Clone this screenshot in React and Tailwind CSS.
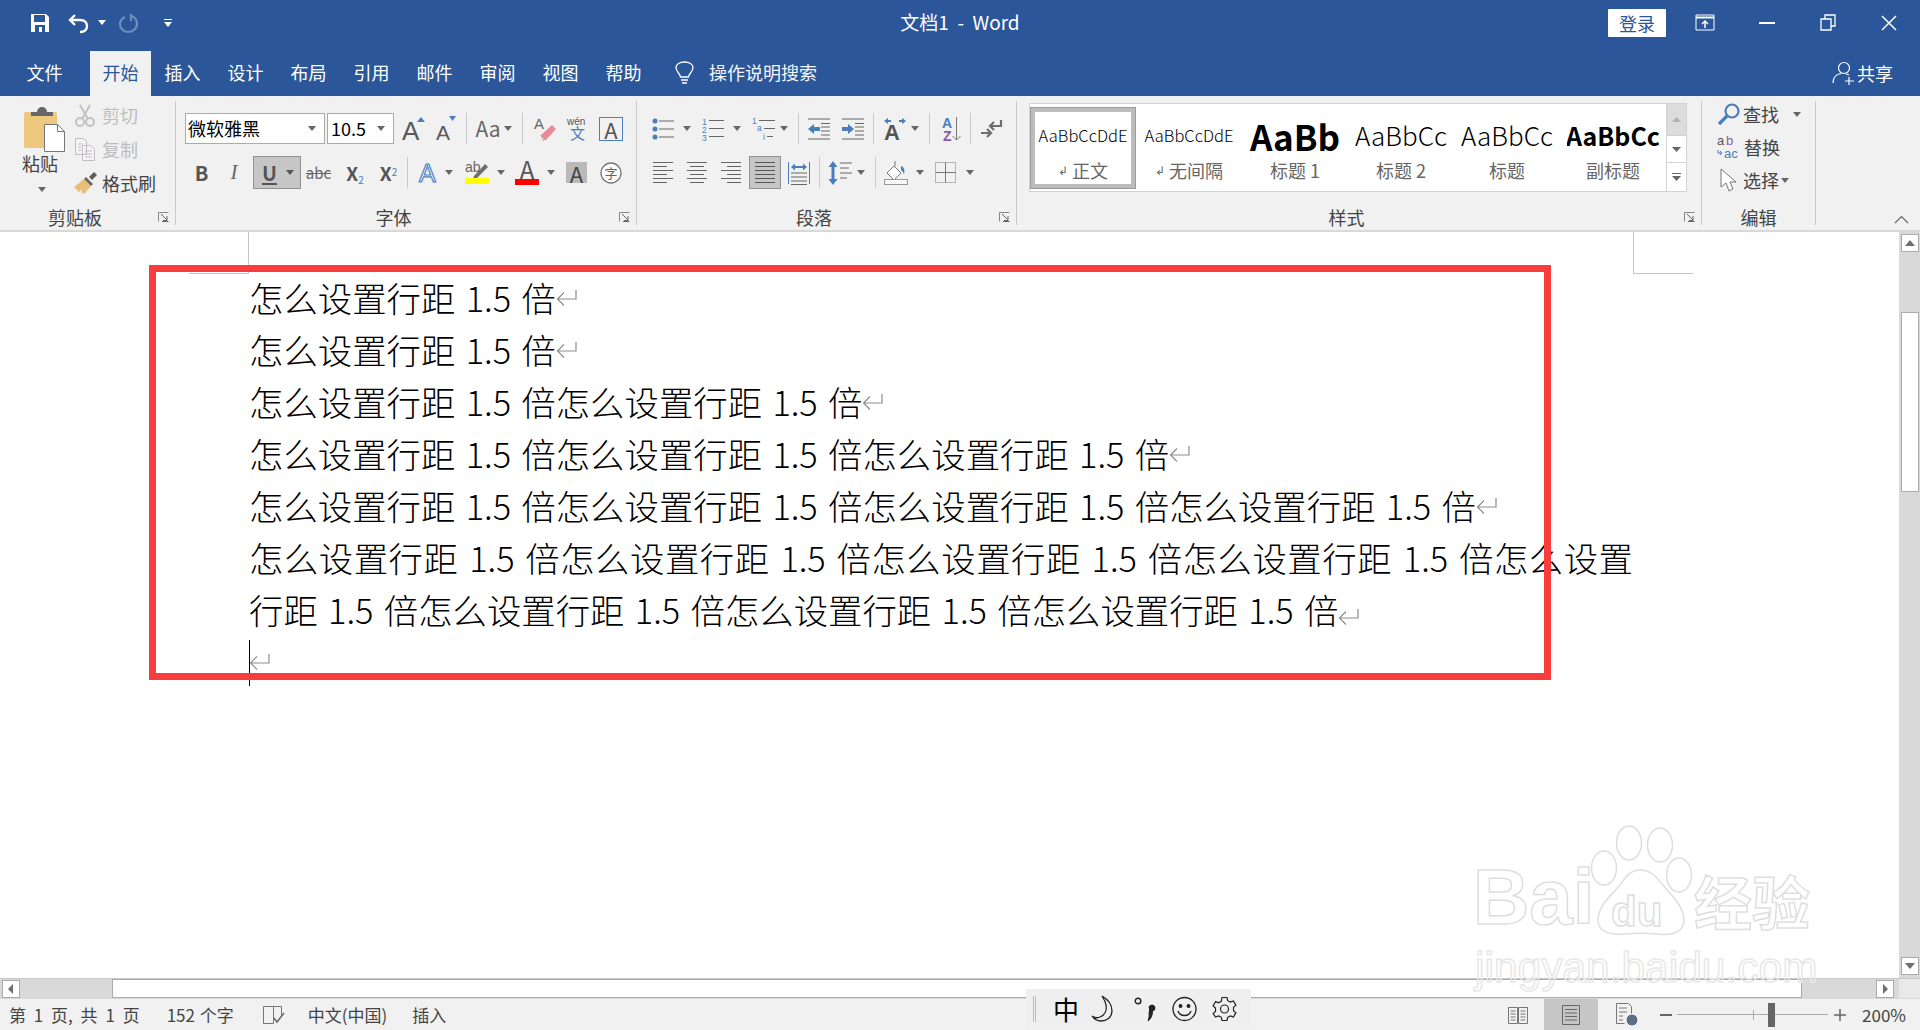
import React from "react";

const GR = "#666666";
const BL = "#4a7ebb";
const Slot = ({ c = "", children }) => <div className={"flex items-center justify-center shrink-0 " + c}>{children}</div>;
const Tri = ({ c = "w-[8px] ml-[4px]", color = "#666" }) => (
  <Slot c={c}><svg width="8" height="5"><path d="M0 0h8L4 5z" fill={color} /></svg></Slot>
);
const Sep = ({ c = "" }) => <div className={"w-px h-[31px] bg-[#c9c9c9] shrink-0 " + c} />;
const T = ({ x, y, s = 12, f = "#555", w = 400, children }) => (
  <text x={x} y={y} fontSize={s} fill={f} fontWeight={w} fontFamily="'Liberation Sans','Noto Sans CJK SC',sans-serif">{children}</text>
);
const Lines = ({ w = 20, rows, top = 0, gap = 4, color = GR, h = 22 }) => (
  <svg width={w} height={h}>
    {rows.map((r, i) => <rect key={i} x={r[0]} y={top + i * gap} width={r[1] - r[0]} height="1" fill={color} />)}
  </svg>
);
const Launcher = () => (
  <svg width="11" height="10"><path d="M0.5 0.5h10M0.5 0.5v9" stroke="#888" fill="none" /><path d="M3 2l6 6M9 4v4.5H5M10.5 9.5H4" stroke="#666" fill="none" /></svg>
);
const GroupLabel = ({ children, launcher = true }) => (
  <div className="mt-auto mb-[-1px] h-[18px] flex items-center text-[18px] leading-none text-[#444]">
    <span className="flex-1 text-center">{children}</span>
    {launcher && <span className="w-[25px] flex justify-end pr-[6px]"><Launcher /></span>}
  </div>
);

const Save = () => (
  <svg width="20" height="20"><path d="M1 1h15l3 3v15H1z" fill="#fff" /><rect x="4" y="2" width="11" height="7" fill="#2b579a" /><rect x="5" y="12" width="10" height="7" fill="#2b579a" /><rect x="9" y="14" width="3" height="5" fill="#fff" /></svg>
);
const Undo = () => (
  <svg width="21" height="20"><path d="M7 2L2 7l5 5M2 7h10c5 0 7 3 7 6 0 4-3 6-7 6" stroke="#fff" strokeWidth="2.4" fill="none" /></svg>
);
const Redo = () => (
  <svg width="20" height="20"><path d="M6 4C2 6 1 9 1 11c0 5 4 8 8 8s9-3 9-8c0-4-2-7-6-8M12 1v7" stroke="#6c8dbd" strokeWidth="2.2" fill="none" /></svg>
);
const Bulb = () => (
  <svg width="19" height="24"><path d="M5.500 16c0-3-4.500-5-4.500-9.500C1 3 5 1 9.500 1S18 3 18 6.500C18 11 13.500 13 13.500 16z" stroke="#fff" strokeWidth="1.300" fill="none" /><path d="M6 19h7M7 22h5" stroke="#fff" strokeWidth="1.500" /></svg>
);
const Person = () => (
  <svg width="24" height="24"><circle cx="12" cy="7" r="5.500" stroke="#fff" strokeWidth="1.200" fill="none" /><path d="M1 22c0-6 4-9 8-9.500M14 13c1 .2 2 .6 3 1M17 16v8M13 20h9" stroke="#fff" strokeWidth="1.200" fill="none" /></svg>
);

const Paste = () => (
  <svg width="42" height="46">
    <path d="M1 8a2 2 0 012-2h29a2 2 0 012 2v34H3a2 2 0 01-2-2z" fill="#edc87e" />
    <path d="M8 10V6h6a5 5 0 0110 0h6v4z" fill="#666" />
    <path d="M21.500 18.500h13l7 7V45.500h-20z" fill="#fff" stroke="#777" />
    <path d="M34.500 18.500v7h7" fill="none" stroke="#777" />
  </svg>
);
const Scissors = () => (
  <svg width="20" height="23" fill="none" stroke="#c2c2c2" strokeWidth="2"><circle cx="5" cy="18" r="4" /><circle cx="15" cy="18" r="4" /><path d="M7 15L15 1M13 15L5 1" /></svg>
);
const Copy = () => (
  <svg width="20" height="23" fill="#f4f4f4" stroke="#c3bcc3"><path d="M.5 .5h8l3 3v13H.5zM7.500 7.500h8l4 4v11h-12z" /><path d="M3 6h5M3 9h3M3 12h3M10 13h7M10 16h7M10 19h7" /></svg>
);
const Brush = () => (
  <svg width="24" height="24"><path d="M10 8l7 7-7 8-3-2 1-3-3 3-5-5z" fill="#e8bf79" /><path d="M10 8l2-2 7 7-2 2z" fill="#666" /><path d="M15 6l5-5 3 3-5 5z" fill="#5c5c5c" /></svg>
);
const Eraser = () => (
  <svg width="22" height="26"><T x="0" y="13" s="15" f="#666">A</T><path d="M6 20L18 9l4 4-11 12h-2z" fill="#e88a9b" /><path d="M6 20l5 5" stroke="#fff" /></svg>
);
const Wen = () => (
  <svg width="21" height="24"><T x="0" y="8" s="10" f="#555">wén</T><T x="3" y="22" s="15" f={BL}>文</T></svg>
);
const Highlighter = () => (
  <svg width="24" height="23"><T x="0" y="11" s="14" f="#666">ab</T><path d="M9 15L20 3l3 3-11 11-4 1z" fill="#6e6e6e" /><rect y="17" width="24" height="6" fill="#ffff00" /></svg>
);
const Aletter = ({ f = "#595959", s = 26, w = 400, x = 0, y = 21, W = 22, H = 24, extra = null }) => (
  <svg width={W} height={H}><T x={x} y={y} s={s} f={f} w={w}>A</T>{extra}</svg>
);
const CircleZi = () => (
  <svg width="22" height="22"><circle cx="11" cy="11" r="10" stroke="#777" strokeWidth="1.300" fill="#fff" /><T x="4.500" y="16" s="13" f="#666">字</T></svg>
);
const Bullets = () => (
  <svg width="22" height="22"><circle cx="3" cy="3" r="2.500" fill={BL} /><circle cx="3" cy="11" r="2.500" fill={BL} /><circle cx="3" cy="19" r="2.500" fill={BL} /><path d="M7 3h15M7 11h15M7 19h15" stroke={GR} /></svg>
);
const Numbered = () => (
  <svg width="22" height="24"><T x="0" y="8" s="8.500" f={BL}>1</T><T x="0" y="16" s="8.500" f={BL}>2</T><T x="0" y="24" s="8.500" f={BL}>3</T><path d="M7 3.500h15M7 11.500h15M7 19.500h15" stroke={GR} /></svg>
);
const Multi = () => (
  <svg width="23" height="24"><T x="0" y="7" s="8.500" f={BL}>1</T><T x="5" y="14" s="8.500" f={BL}>a</T><T x="11" y="23" s="8.500" f={BL}>i</T><path d="M7 3.500h16M12 11.500h11M15 19.500h6" stroke={GR} /></svg>
);
const Dec = () => (
  <svg width="22" height="22"><path d="M0 1h22M0 21h22M13 5.500h9M13 9h9M13 13h9M13 17h9" stroke={GR} /><path d="M0 11l6-5v3h6v4H6v3z" fill={BL} /></svg>
);
const Inc = () => (
  <svg width="22" height="22"><path d="M0 1h22M0 21h22M13 5.500h9M13 9h9M13 13h9M13 17h9" stroke={GR} /><path d="M12 11L6 6v3H0v4h6v3z" fill={BL} /></svg>
);
const TextDir = () => (
  <svg width="24" height="24"><T x="1" y="23" s="22" f="#555" w="700">A</T><path d="M1 4l4-3v2h3v2H5v2zM23 4l-4-3v2h-3v2h3v2z" fill={BL} /></svg>
);
const Sort = () => (
  <svg width="19" height="26"><T x="0" y="12" s="14" f={BL} w="700">A</T><T x="1" y="25" s="14" f="#8a5aa8" w="700">Z</T><path d="M14.500 1v23M10.500 20l4 4 4-4" stroke="#777" fill="none" /></svg>
);
const Marks = () => (
  <svg width="21" height="20" fill="none" stroke="#6e6e6e" strokeWidth="2.200"><path d="M20 1v6H9M13 3L9 7l4 4M0 14h10M6 10l4 4-4 4" /></svg>
);
const Distrib = () => (
  <svg width="22" height="24"><path d="M.5 1v22M21.500 1v22" stroke={BL} /><path d="M3 6l4-3.500v2.500h8V2.500L19 6l-4 3.500V7H7v2.500z" fill={BL} /><path d="M3 12h16M3 16h16M3 20h16M3 23.500h16" stroke={GR} /></svg>
);
const Spacing = () => (
  <svg width="24" height="24"><path d="M5 0l4.500 6H6.500v12h3L5 24 .5 18h3V6h-3z" fill={BL} /><path d="M12 2h12M12 7h9M12 12h12M12 17h7" stroke={GR} /></svg>
);
const Shading = () => (
  <svg width="24" height="24"><path d="M11 0v5M10 5l-7 7 7 7 7-7z" stroke="#777" fill="#fff" /><path d="M17 5c3 1 4 4 3 8-1-1-1-3-3-4z" fill={BL} /><rect x=".5" y="18.500" width="23" height="5" fill="#f8f8f8" stroke="#999" /></svg>
);
const Borders = () => (
  <svg width="21" height="21"><path d="M.5 .5h20v20H.5z" fill="none" stroke="#777" strokeDasharray="1 1" /><path d="M10.500 .5v20M.5 10.500h20" stroke="#777" /></svg>
);
const Magnifier = () => (
  <svg width="26" height="24" fill="none"><circle cx="16" cy="9" r="6.500" stroke={BL} strokeWidth="2.200" /><path d="M11 14L3 22" stroke={BL} strokeWidth="3.200" /></svg>
);
const Replace = () => (
  <svg width="24" height="24"><T x="0" y="10" s="13" f="#555">a</T><T x="9" y="10" s="13" f="#8a5aa8">b</T><T x="7" y="23" s="13" f={BL}>ac</T><path d="M1 15v3h4M3 16l2 2-2 2" stroke={BL} fill="none" /></svg>
);
const Cursor = () => (
  <svg width="18" height="24"><path d="M1 1v18l5-4 3 8 4-2-3-7h6z" fill="#fff" stroke="#777" /></svg>
);
const ReturnMark = ({ c = "mt-[4px]" }) => (
  <svg width="21" height="20" className={"inline-block shrink-0 " + c}><path d="M20 1v9H2M8 3.500L1.500 10 8 16.500" stroke="#8e8e8e" fill="none" strokeWidth="1.200" /></svg>
);

const ScrollBtn = ({ d, c = "" }) => (
  <div className={"w-[18px] h-[18px] bg-white border border-[#ababab] flex items-center justify-center shrink-0 " + c}>
    <svg width="10" height="10"><path d={d} fill="#6f6f6f" /></svg>
  </div>
);

const unit = "怎么设置行距 1.5 倍";
const rep = (n) => Array(n).fill(unit).join("");
const lines = [1, 1, 2, 3, 4];

const StyleItem = ({ main, label, sel, mc = "text-[16.5px] font-light" }) => (
  <div className={"w-[106px] h-[82px] mt-[3px] shrink-0 flex flex-col items-center overflow-hidden " + (sel ? "border-[5px] border-[#bcbcbc] outline outline-1 outline-[#9c9c9c] -outline-offset-1" : "border-[5px] border-transparent")}>
    <div className={"h-[46px] w-[92px] flex items-center justify-center whitespace-nowrap overflow-hidden text-black " + mc}>{main}</div>
    <div className="h-[24px] flex items-center text-[18px] leading-none text-[#666]">{label}</div>
  </div>
);
const Ret = () => <span className="text-[12px] mr-[4px] text-[#666]">↲</span>;

export default function App() {
  return (
    <div className="relative w-[1920px] h-[1030px] overflow-hidden flex flex-col bg-white [&_svg]:overflow-visible font-['Noto_Sans_CJK_SC','Liberation_Sans',sans-serif]">
      {/* title bar */}
      <div className="h-[51px] bg-[#2b579a] grid grid-cols-[1fr_auto_1fr] items-center text-white shrink-0">
        <div className="flex items-center pl-[30px] pb-[6px]">
          <Save />
          <Slot c="ml-[18px]"><Undo /></Slot>
          <Tri c="ml-[9px] w-[8px]" color="#fff" />
          <Slot c="ml-[13px]"><Redo /></Slot>
          <Slot c="ml-[25px] flex-col gap-[2px]">
            <div className="w-[8px] h-[1px] bg-white" />
            <svg width="8" height="5"><path d="M0 0h8L4 5z" fill="#fff" /></svg>
          </Slot>
        </div>
        <div className="text-[19px] leading-none pb-[8px] whitespace-pre">文档1  -  Word</div>
        <div className="flex items-center justify-end pb-[6px]">
          <div className="w-[58px] h-[28px] bg-white rounded-[1px] text-[#2b579a] text-[18px] flex items-center justify-center leading-none">登录</div>
          <Slot c="ml-[29px]">
            <svg width="20" height="17" fill="none" stroke="#fff"><path d="M1 1h18v15H1z" /><path d="M1 3.500h18" strokeWidth="2" /><path d="M10 14V7M7 10l3-3 3 3" strokeWidth="1.500" /></svg>
          </Slot>
          <Slot c="ml-[44px]"><div className="w-[16px] h-[2px] bg-white" /></Slot>
          <Slot c="ml-[45px]">
            <svg width="16" height="17" fill="none" stroke="#fff" strokeWidth="1.300"><path d="M1 5h10v11H1zM5 5V1h10v11h-4" /></svg>
          </Slot>
          <Slot c="ml-[45px] mr-[23px]">
            <svg width="16" height="16" stroke="#fff" strokeWidth="1.500"><path d="M1 1l14 14M15 1L1 15" /></svg>
          </Slot>
        </div>
      </div>

      {/* tabs */}
      <div className="h-[45px] bg-[#2b579a] flex items-stretch text-white text-[18px] leading-none shrink-0">
        <div className="ml-[14px] w-[61px] flex items-center justify-center pb-[3px]">文件</div>
        <div className="ml-[15px] w-[61px] bg-[#f1f1f1] text-[#2b579a] flex items-center justify-center pb-[3px]">开始</div>
        {["插入", "设计", "布局", "引用", "邮件", "审阅", "视图", "帮助"].map((t) => (
          <div key={t} className="w-[63px] flex items-center justify-center pb-[3px]">{t}</div>
        ))}
        <div className="ml-[20px] flex items-center pb-[2px]"><Bulb /></div>
        <div className="ml-[15px] flex items-center pb-[3px] text-[#f2f5fa]">操作说明搜索</div>
        <div className="ml-auto mr-[27px] flex items-center gap-[1px] pb-[2px]"><Person /><span>共享</span></div>
      </div>

      {/* ribbon */}
      <div className="h-[136px] bg-[#f1f1f1] border-b-[2px] border-[#d8d8d8] flex pt-[5px] pb-[5px] text-[#444] text-[18px] leading-none shrink-0">
        {/* clipboard */}
        <div className="w-[176px] border-r border-[#c9c9c9] flex flex-col shrink-0">
          <div className="flex">
            <div className="w-[75px] pl-[23px] shrink-0 flex flex-col">
              <div className="mt-[5px]"><Paste /></div>
              <div className="mt-[2px] -ml-[1px] text-[18px]">粘贴</div>
              <div className="mt-[15px] ml-[15px]"><svg width="8" height="5"><path d="M0 0h8L4 5z" fill="#666" /></svg></div>
            </div>
            <div className="flex flex-col gap-[6px]">
              <div className="h-[28px] flex items-center"><Scissors /><span className="ml-[7px] text-[#bdbdbd]">剪切</span></div>
              <div className="h-[28px] flex items-center"><Copy /><span className="ml-[7px] text-[#bdbdbd]">复制</span></div>
              <div className="h-[28px] flex items-center -ml-[1px]"><Brush /><span className="ml-[4px]">格式刷</span></div>
            </div>
          </div>
          <GroupLabel>剪贴板</GroupLabel>
        </div>

        {/* font */}
        <div className="w-[461px] border-r border-[#c9c9c9] flex flex-col shrink-0">
          <div className="flex items-center h-[33px] mt-[11px]">
            <div className="ml-[9px] w-[140px] h-[31px] bg-white border border-[#ababab] flex items-center pl-[2px] pr-[8px] shrink-0">
              <span className="flex-1 text-black pb-[2px]">微软雅黑</span>
              <svg width="8" height="5"><path d="M0 0h8L4 5z" fill="#666" /></svg>
            </div>
            <div className="ml-[2px] w-[67px] h-[31px] bg-white border border-[#ababab] flex items-center pl-[3px] pr-[8px] shrink-0">
              <span className="flex-1 text-black pb-[2px]">10.5</span>
              <svg width="8" height="5"><path d="M0 0h8L4 5z" fill="#666" /></svg>
            </div>
            <Slot c="ml-[8px] w-[23px]"><Aletter s={26} W={23} H={26} y={24} extra={<path d="M15 6l4-5 4 5z" fill={BL} />} /></Slot>
            <Slot c="ml-[11px] w-[20px]"><Aletter s={21} W={20} H={26} y={24} extra={<path d="M13 0h7l-3.500 5z" fill={BL} />} /></Slot>
            <Sep c="ml-[10px]" />
            <Slot c="ml-[9px] w-[24px] text-[21px] text-[#666]"><span>Aa</span></Slot>
            <Tri c="ml-[4px] w-[8px]" />
            <Sep c="ml-[10px]" />
            <Slot c="ml-[11px] w-[21px]"><Eraser /></Slot>
            <Slot c="ml-[12px] w-[20px]"><Wen /></Slot>
            <Slot c="ml-[12px] w-[24px] h-[24px] border border-[#4a7ebb] text-[22px] text-[#555]"><span>A</span></Slot>
          </div>
          <div className="flex items-center h-[33px] mt-[11px]">
            <Slot c="ml-[19px] w-[13px] text-[20px] font-bold text-[#555]"><span>B</span></Slot>
            <Slot c="ml-[20px] w-[12px] text-[21px] italic text-[#666] font-['Liberation_Serif',serif]"><span>I</span></Slot>
            <Slot c="ml-[13px] w-[48px] h-[33px] bg-[#c6c6c6] border border-[#929292] gap-[9px] pl-[2px]">
              <span className="text-[20px] font-bold text-[#555] underline underline-offset-2">U</span>
              <svg width="8" height="5"><path d="M0 0h8L4 5z" fill="#555" /></svg>
            </Slot>
            <Slot c="ml-[5px] w-[25px] text-[15px] text-[#666] line-through"><span>abc</span></Slot>
            <Slot c="ml-[14px] w-[20px] text-[19px] font-semibold text-[#555] items-baseline"><span>X<sub className="text-[10px] text-[#4a7ebb] font-normal">2</sub></span></Slot>
            <Slot c="ml-[14px] w-[19px] text-[19px] font-semibold text-[#555]"><span>X<sup className="text-[10px] text-[#4a7ebb] font-normal">2</sup></span></Slot>
            <Sep c="ml-[9px]" />
            <Slot c="ml-[11px] w-[18px]">
              <svg width="20" height="24"><text x="1" y="21" fontSize="25" fontFamily="'Liberation Sans',sans-serif" fill="#fff" stroke={BL} strokeWidth="1.200">A</text></svg>
            </Slot>
            <Tri c="ml-[8px] w-[8px]" />
            <Slot c="ml-[12px] w-[24px]"><Highlighter /></Slot>
            <Tri c="ml-[8px] w-[8px]" />
            <Slot c="ml-[10px] w-[24px] flex-col">
              <span className="text-[24px] leading-[18px] text-[#555]">A</span>
              <div className="w-[24px] h-[6px] mt-[1px] bg-[#ff0000]" />
            </Slot>
            <Tri c="ml-[8px] w-[8px]" />
            <Slot c="ml-[11px] w-[21px] h-[21px] bg-[#b9b9b9] text-[22px] text-[#444]"><span>A</span></Slot>
            <Slot c="ml-[13px] w-[22px]"><CircleZi /></Slot>
          </div>
          <GroupLabel>字体</GroupLabel>
        </div>

        {/* paragraph */}
        <div className="w-[380px] border-r border-[#c9c9c9] flex flex-col shrink-0">
          <div className="flex items-center h-[33px] mt-[11px]">
            <Slot c="ml-[15px] w-[22px]"><Bullets /></Slot>
            <Tri c="ml-[9px] w-[8px]" />
            <Slot c="ml-[11px] w-[22px]"><Numbered /></Slot>
            <Tri c="ml-[9px] w-[8px]" />
            <Slot c="ml-[11px] w-[22px]"><Multi /></Slot>
            <Tri c="ml-[6px] w-[8px]" />
            <Sep c="ml-[10px]" />
            <Slot c="ml-[9px] w-[22px]"><Dec /></Slot>
            <Slot c="ml-[12px] w-[22px]"><Inc /></Slot>
            <Sep c="ml-[9px]" />
            <Slot c="ml-[9px] w-[24px]"><TextDir /></Slot>
            <Tri c="ml-[4px] w-[8px]" />
            <Sep c="ml-[10px]" />
            <Slot c="ml-[12px] w-[19px]"><Sort /></Slot>
            <Sep c="ml-[9px]" />
            <Slot c="ml-[10px] w-[21px]"><Marks /></Slot>
          </div>
          <div className="flex items-center h-[33px] mt-[11px]">
            <Slot c="ml-[16px] w-[20px]"><Lines rows={[[0, 20], [0, 14], [0, 20], [0, 14], [0, 20], [0, 14]]} /></Slot>
            <Slot c="ml-[14px] w-[20px]"><Lines rows={[[0, 20], [3, 17], [0, 20], [3, 17], [0, 20], [3, 17]]} /></Slot>
            <Slot c="ml-[14px] w-[20px]"><Lines rows={[[0, 20], [6, 20], [0, 20], [6, 20], [0, 20], [6, 20]]} /></Slot>
            <Slot c="ml-[8px] w-[32px] h-[33px] bg-[#c6c6c6] border border-[#929292]"><Lines rows={[[0, 20], [0, 20], [0, 20], [0, 20], [0, 20], [0, 20]]} color="#555" /></Slot>
            <Slot c="ml-[7px] w-[22px]"><Distrib /></Slot>
            <Sep c="ml-[9px]" />
            <Slot c="ml-[8px] w-[24px]"><Spacing /></Slot>
            <Tri c="ml-[5px] w-[8px]" />
            <Sep c="ml-[10px]" />
            <Slot c="ml-[8px] w-[24px]"><Shading /></Slot>
            <Tri c="ml-[8px] w-[8px]" />
            <Slot c="ml-[11px] w-[21px]"><Borders /></Slot>
            <Tri c="ml-[10px] w-[8px]" />
          </div>
          <GroupLabel>段落</GroupLabel>
        </div>

        {/* styles */}
        <div className="w-[685px] border-r border-[#c9c9c9] flex flex-col shrink-0">
          <div className="ml-[12px] mt-[2px] w-[658px] h-[89px] bg-white border border-[#d2d2d2] flex">
            <StyleItem sel main="AaBbCcDdE" label={<><Ret />正文</>} />
            <StyleItem main="AaBbCcDdE" label={<><Ret />无间隔</>} />
            <StyleItem main="AaBb" mc="text-[35px] font-bold" label="标题 1" />
            <StyleItem main="AaBbCc" mc="text-[26px] font-light" label="标题 2" />
            <StyleItem main="AaBbCc" mc="text-[26px] font-light" label="标题" />
            <StyleItem main="AaBbCc" mc="text-[25px] font-bold" label="副标题" />
            <div className="flex-1 flex flex-col border-l border-[#d2d2d2]">
              <div className="h-[31px] bg-[#dcdcdc] flex items-center justify-center"><svg width="9" height="5"><path d="M0 5h9L4.500 0z" fill="#b0b0b0" /></svg></div>
              <div className="h-[28px] border-t border-b border-[#d2d2d2] flex items-center justify-center"><svg width="9" height="5"><path d="M0 0h9L4.500 5z" fill="#666" /></svg></div>
              <div className="flex-1 flex flex-col items-center justify-center gap-[2px]"><div className="w-[9px] h-px bg-[#666]" /><svg width="9" height="5"><path d="M0 0h9L4.500 5z" fill="#666" /></svg></div>
            </div>
          </div>
          <GroupLabel>样式</GroupLabel>
        </div>

        {/* editing */}
        <div className="w-[114px] border-r border-[#c9c9c9] flex flex-col shrink-0">
          <div className="flex flex-col gap-[5px] pl-[15px] -mt-[1px]">
            <div className="h-[28px] flex items-center -ml-[1px]"><Magnifier /><span className="ml-[1px]">查找</span><svg className="ml-[14px]" width="8" height="5"><path d="M0 0h8L4 5z" fill="#666" /></svg></div>
            <div className="h-[28px] flex items-center"><Replace /><span className="ml-[3px]">替换</span></div>
            <div className="h-[28px] flex items-center ml-[3px]"><Cursor /><span className="ml-[5px]">选择</span><svg className="ml-[2px]" width="8" height="5"><path d="M0 0h8L4 5z" fill="#666" /></svg></div>
          </div>
          <GroupLabel launcher={false}>编辑</GroupLabel>
        </div>
        <div className="flex-1 flex items-end justify-end pr-[11px] pb-[1px]">
          <svg width="15" height="9" fill="none" stroke="#666" strokeWidth="1.200"><path d="M1 8l6.500-6.500L14 8" /></svg>
        </div>
      </div>

      {/* doc + vertical scrollbar */}
      <div className="flex-1 min-h-0 flex">
        <div className="flex-1 pt-[39px] pl-[249px] text-black">
          <div className="w-[1384px] text-[34.4px] leading-[52px] font-light [word-spacing:2.7px]">
            {lines.map((n, i) => (
              <div key={i} className="whitespace-nowrap flex items-center h-[52px]">{rep(n)}<ReturnMark /></div>
            ))}
            <p className="text-justify [text-justify:inter-word]">
              {rep(8)}<ReturnMark c="align-[-4px]" />
            </p>
            <div className="h-[52px] flex items-center"><ReturnMark /></div>
          </div>
        </div>
        <div className="w-[21px] bg-[#d9d9d9] flex flex-col items-center pt-[2px] pb-[3px] shrink-0">
          <ScrollBtn d="M0 8h10L5 2z" />
          <div className="mt-[60px] w-[18px] h-[180px] bg-white border border-[#ababab]" />
          <ScrollBtn c="mt-auto" d="M0 2h10L5 8z" />
        </div>
      </div>

      {/* horizontal scrollbar */}
      <div className="h-[20px] bg-[#e9e9e9] border-t border-[#c9c9c9] flex items-stretch shrink-0">
        <div className="w-[1899px] bg-[#d9d9d9] flex items-center pl-[2px] pr-[5px]">
          <ScrollBtn d="M7 0v10L2 5z" />
          <div className="ml-[92px] w-[1690px] h-[19px] bg-white border border-[#ababab] shrink-0" />
          <ScrollBtn c="ml-auto" d="M3 0v10L8 5z" />
        </div>
      </div>

      {/* status bar */}
      <div className="h-[32px] bg-[#f1f1f1] border-t border-[#d8d8d8] flex items-center text-[17px] leading-none text-[#444] shrink-0">
        <span className="ml-[9px] whitespace-pre [word-spacing:4px]">第 1 页, 共 1 页</span>
        <span className="ml-[27px] whitespace-pre [word-spacing:1px]">152 个字</span>
        <Slot c="ml-[29px]">
          <svg width="22" height="20" fill="none" stroke="#777"><path d="M.5 1.500h10v17H.5zM10.500 1.500h8v10" /><path d="M11 13l3 4 7-9" stroke="#666" strokeWidth="1.500" /></svg>
        </Slot>
        <span className="ml-[23px]">中文(中国)</span>
        <span className="ml-[25px]">插入</span>
        <div className="ml-auto flex items-center h-full">
          <Slot>
            <svg width="20" height="20" fill="none" stroke="#777"><path d="M.5 2.500h9v16h-9zM10.500 2.500h9v16h-9zM2.500 6h5M2.500 9h5M2.500 12h5M2.500 15h5M12.500 6h5M12.500 9h5M12.500 12h5M12.500 15h5" /></svg>
          </Slot>
          <Slot c="ml-[16px] w-[54px] h-full bg-[#c6c6c6]">
            <svg width="18" height="20" fill="none" stroke="#666"><path d="M.5 .5h17v19H.5zM3 4.500h12M3 8h12M3 11.500h12M3 15h12" /></svg>
          </Slot>
          <Slot c="ml-[18px]">
            <svg width="24" height="24" fill="none" stroke="#777"><path d="M.5 .5h12l3 3v8M.5 .5v20h8M3 5h8M3 9h8M3 13h4M3 17h4" /><circle cx="16" cy="17" r="6" fill="#5b6f8a" stroke="#fff" /></svg>
          </Slot>
          <div className="ml-[20px] w-[12px] h-[2px] bg-[#666]" />
          <div className="ml-[5px] w-[151px] h-[20px] flex items-center">
            <div className="w-[76px] h-px bg-[#aaa]" />
            <div className="w-px h-[10px] bg-[#aaa]" />
            <div className="w-[14px] h-px bg-[#aaa]" />
            <div className="w-[7px] h-[24px] bg-[#666]" />
            <div className="flex-1 h-px bg-[#aaa]" />
          </div>
          <svg className="ml-[6px]" width="12" height="12" stroke="#666" strokeWidth="1.500"><path d="M0 6h12M6 0v12" /></svg>
          <span className="ml-[16px] mr-[14px]">200%</span>
        </div>
      </div>

      {/* crop marks */}
      <div className="absolute left-[248px] top-[232px] w-px h-[41px] bg-[#c4c4c4]" />
      <div className="absolute left-[189px] top-[273px] w-[60px] h-px bg-[#c4c4c4]" />
      <div className="absolute left-[1633px] top-[232px] w-px h-[41px] bg-[#c4c4c4]" />
      <div className="absolute left-[1633px] top-[273px] w-[60px] h-px bg-[#c4c4c4]" />

      {/* text caret */}
      <div className="absolute left-[249px] top-[640px] w-px h-[46px] bg-black" />

      {/* red annotation */}
      <div className="absolute left-[149px] top-[265px] w-[1402px] h-[415px] border-[7px] border-[#f93d3d]" />

      {/* baidu watermark */}
      <div className="absolute left-[1473px] top-[820px] w-[345px] h-[175px] pointer-events-none text-transparent [-webkit-text-stroke:1.5px_#dedede] font-['Liberation_Sans',sans-serif] font-bold">
        <div className="flex items-end h-[118px]">
          <span className="text-[78px] leading-[82px] w-[117px] shrink-0">Bai</span>
          <svg width="104" height="118" className="shrink-0" fill="#fff" stroke="#dedede" strokeWidth="1.500">
            <ellipse cx="14" cy="48" rx="12.500" ry="17" />
            <ellipse cx="39" cy="23" rx="12.500" ry="17" />
            <ellipse cx="70" cy="25" rx="12.500" ry="17" />
            <ellipse cx="89" cy="55" rx="12.500" ry="17" />
            <path d="M50 50C40 50 35 58 30 65 22 75 8 85 8 100c0 12 12 15 27 14 10-1 23-1 33 0 14 2 26-2 26-14 0-15-16-28-22-36-6-8-12-14-22-14z" />
            <text x="21" y="106" fontSize="42" fontFamily="'Liberation Sans',sans-serif">du</text>
          </svg>
          <span className="text-[58px] leading-[76px] shrink-0 font-['Noto_Sans_CJK_SC',sans-serif]">经验</span>
        </div>
        <div className="mt-[5px] ml-[2px] text-[42.5px] leading-[50px] font-normal whitespace-nowrap [-webkit-text-stroke:1.5px_#e8e8e8]">jingyan.baidu.com</div>
      </div>

      {/* IME toolbar */}
      <div className="absolute left-[1026px] top-[989px] w-[225px] h-[40px] bg-[#efefef] flex items-center text-black">
        <div className="ml-[7px] w-[3px] h-[26px] border-x border-[#bdbdbd]" />
        <span className="ml-[17px] text-[26px] leading-none">中</span>
        <Slot c="ml-[12px]">
          <svg width="24" height="28" fill="none" stroke="#222" strokeWidth="1.300"><path d="M11 1c7 4 10 10 10 15 0 6-5 10-11 10-4 0-7-2-9-5 3 2 6 2 8 1 5-2 7-7 6-12-.5-3-2-6-4-9z" /></svg>
        </Slot>
        <Slot c="ml-[19px]">
          <svg width="22" height="28" fill="none" stroke="#222"><circle cx="4" cy="6" r="2.800" strokeWidth="1.400" /><path d="M15 13a3 3 0 113.500 3c0 4-1.500 8-4.500 10 1-3 1.500-5 1-9" fill="#222" /></svg>
        </Slot>
        <Slot c="ml-[16px]">
          <svg width="25" height="26" fill="none" stroke="#222" strokeWidth="1.300"><circle cx="12.500" cy="13" r="11.500" /><circle cx="8.500" cy="10" r="1.300" fill="#222" /><circle cx="16.500" cy="10" r="1.300" fill="#222" /><path d="M6 15c2 6 11 6 13 0" /></svg>
        </Slot>
        <Slot c="ml-[15px]">
          <svg width="25" height="26" fill="none" stroke="#222" strokeWidth="1.200"><circle cx="12.500" cy="13" r="4" /><path d="M10 1.500h5l.7 3.200 2.700 1.400 3-1.200 2.500 4.300-2.400 2.100v3.400l2.400 2.100-2.500 4.300-3-1.200-2.700 1.400-.7 3.200h-5l-.7-3.200-2.700-1.400-3 1.200L1.100 17.500l2.400-2.100v-3.400L1.100 9.900 3.600 5.600l3 1.200 2.700-1.400z" /></svg>
        </Slot>
      </div>
    </div>
  );
}
